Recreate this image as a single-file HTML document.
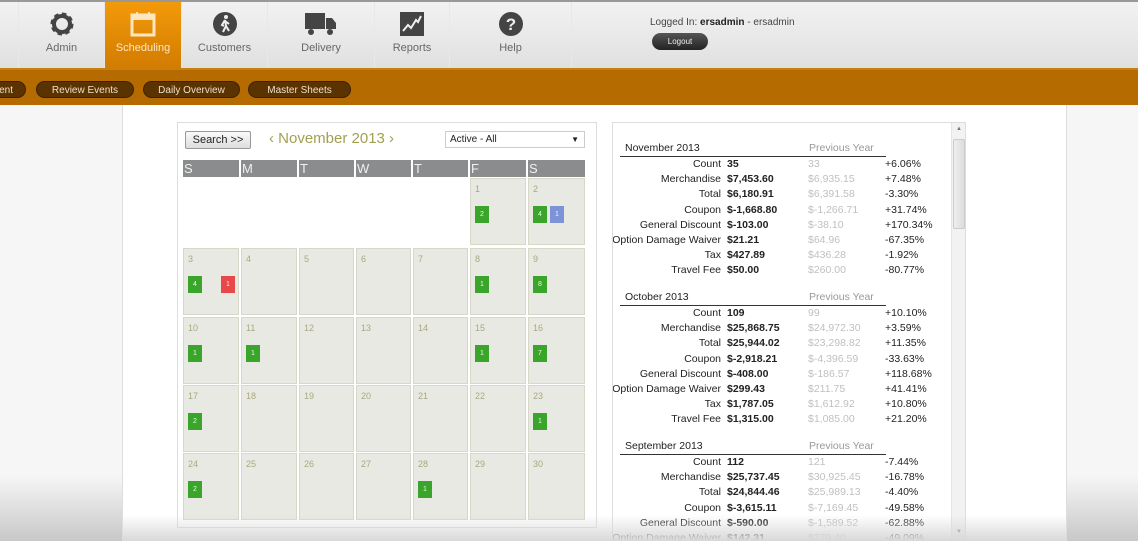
<!DOCTYPE html>
<html><head><meta charset="utf-8"><style>
*{margin:0;padding:0;box-sizing:border-box}
body{width:1138px;height:541px;overflow:hidden;position:relative;font-family:"Liberation Sans",sans-serif;background:#fff}
.a{position:absolute}
#hdr{left:0;top:0;width:1138px;height:68px;background:linear-gradient(#f2f2f2,#e0e0e0);border-top:2px solid #999}
.tab{position:absolute;top:0;height:68px;text-align:center;font-size:11px;color:#666;border-right:1px solid #e8e8e8}
.tab span{position:absolute;left:0;right:0;top:40px}
.tab svg{position:absolute;top:9px;left:50%;margin-left:-13px}
#bar{left:0;top:68px;width:1138px;height:37px;background:#b56b00;border-top:2px solid #c87f10}
.pill{position:absolute;top:11px;height:17px;border-radius:9px;background:#5a3300;color:#f0e0c8;font-size:10px;line-height:17px;text-align:center;border:1px solid #3d2200}
#lg{left:0;top:105px;width:123px;height:436px;background:linear-gradient(#f6f6f6 85%,#c8c8c8);border-right:1px solid #ddd}
#rg{left:1066px;top:105px;width:72px;height:436px;background:linear-gradient(#f6f6f6 85%,#c8c8c8);border-left:1px solid #ddd}
#bot{left:123px;top:515px;width:943px;height:26px;background:linear-gradient(rgba(255,255,255,0),#d8d8d8)}
#cal{left:177px;top:122px;width:420px;height:406px;border:1px solid #ddd;background:#fff}
.hd{position:absolute;top:160px;height:17px;background:#8a8c8e;color:#f0f0f0;font-size:13px;line-height:17px;padding-left:1px}
.c{position:absolute;height:67px;background:#e9e9e3;border:1px solid #d8d8c8}
.c i{position:absolute;left:4px;top:5px;font-style:normal;font-size:9px;color:#a8a880}
.b{position:absolute;top:27px;width:14px;height:17px;background:#3aa52a;color:#dfd;font-size:7px;line-height:17px;text-align:center}
#st{left:612px;top:122px;width:354px;height:419px;border:1px solid #ddd;background:#fff;overflow:hidden}
.sec{position:absolute;left:7px;width:330px;font-size:10.5px;color:#222}
.sh{height:17px;line-height:17px;border-bottom:1px solid #333;width:266px;position:relative;padding-left:5px;color:#222}
.sh b{position:absolute;left:189px;font-weight:normal;color:#999}
.r{height:15.2px;line-height:15.2px;position:relative}
.r .l{position:absolute;right:229px;white-space:nowrap}
.r .v{position:absolute;left:107px;font-weight:bold}
.r .p{position:absolute;left:188px;color:#c0c0c0}
.r .q{position:absolute;left:265px}
</style></head><body>
<div id="hdr" class="a">
 <div class="tab" style="left:18px;width:87px;border-left:1px solid #e8e8e8"><svg width="26" height="26" viewBox="0 0 26 26"><circle cx="13" cy="13" r="9" fill="none" stroke="#444" stroke-width="5" stroke-dasharray="4 3"/><circle cx="13" cy="13" r="8" fill="none" stroke="#444" stroke-width="4"/></svg><span>Admin</span></div>
 <div class="tab" style="left:105px;width:77px;background:linear-gradient(#f39a0a,#d07a00);color:#fde6c0;height:70px"><svg width="26" height="26" viewBox="0 0 26 26"><rect x="2" y="4" width="22" height="20" fill="none" stroke="#fde6c0" stroke-width="3"/><rect x="2" y="4" width="22" height="5" fill="#fde6c0"/><rect x="6" y="1" width="2" height="5" fill="#fde6c0"/><rect x="18" y="1" width="2" height="5" fill="#fde6c0"/></svg><span>Scheduling</span></div>
 <div class="tab" style="left:182px;width:86px"><svg width="26" height="26" viewBox="0 0 26 26"><circle cx="13" cy="13" r="12" fill="#444"/><circle cx="14" cy="6" r="2" fill="#eee"/><path d="M13 9l-3 5 2 1M13 9l1 6-3 6M14 15l3 5M13 10l4 3" stroke="#eee" stroke-width="2" fill="none"/></svg><span>Customers</span></div>
 <div class="tab" style="left:268px;width:107px"><svg width="34" height="26" viewBox="0 0 34 26" style="margin-left:-17px"><rect x="1" y="2" width="20" height="16" fill="#444"/><path d="M22 7h6l4 5v6H22z" fill="#444"/><circle cx="7" cy="21" r="3" fill="#444"/><circle cx="26" cy="21" r="3" fill="#444"/></svg><span>Delivery</span></div>
 <div class="tab" style="left:375px;width:75px"><svg width="26" height="26" viewBox="0 0 26 26"><rect x="1" y="1" width="24" height="24" fill="#444"/><path d="M4 20l5-6 3 3 5-8 2 2 3-6" stroke="#eee" stroke-width="2" fill="none"/></svg><span>Reports</span></div>
 <div class="tab" style="left:450px;width:122px"><svg width="26" height="26" viewBox="0 0 26 26"><circle cx="13" cy="13" r="12" fill="#444"/><text x="13" y="19" text-anchor="middle" font-size="17" font-weight="bold" fill="#eee" font-family="Liberation Sans">?</text></svg><span>Help</span></div>
 <div class="a" style="left:650px;top:15px;font-size:10px;color:#444">Logged In: <b style="color:#222">ersadmin</b> - ersadmin</div>
 <div class="a" style="left:652px;top:31px;width:56px;height:17px;border-radius:9px;background:linear-gradient(#555,#222);color:#eee;font-size:8px;line-height:17px;text-align:center">Logout</div>
</div>
<div id="bar" class="a">
 <div class="pill" style="left:-20px;width:46px;text-align:right;padding-right:12px">ent</div>
 <div class="pill" style="left:36px;width:98px">Review Events</div>
 <div class="pill" style="left:143px;width:97px">Daily Overview</div>
 <div class="pill" style="left:248px;width:103px">Master Sheets</div>
</div>
<div id="lg" class="a"></div><div id="rg" class="a"></div>
<div id="cal" class="a"></div>
<div class="a" style="left:185px;top:131px;width:66px;height:18px;border:1px solid #999;border-radius:2px;background:linear-gradient(#fafafa,#ddd);font-size:11px;line-height:16px;text-align:center;color:#222">Search &gt;&gt;</div>
<div class="a" style="left:269px;top:130px;font-size:15px;color:#a2a050">&lsaquo; November 2013 &rsaquo;</div>
<div class="a" style="left:445px;top:131px;width:140px;height:17px;border:1px solid #ccc;font-size:10px;line-height:15px;padding-left:4px;color:#222">Active - All<span style="position:absolute;right:5px;font-size:8px">&#9660;</span></div>
<div class="hd" style="left:183px;width:56px">S</div><div class="hd" style="left:241px;width:56px">M</div><div class="hd" style="left:299px;width:55px">T</div><div class="hd" style="left:356px;width:55px">W</div><div class="hd" style="left:413px;width:55px">T</div><div class="hd" style="left:470px;width:56px">F</div><div class="hd" style="left:528px;width:57px">S</div>
<div class="c" style="left:470px;top:178px;width:56px"><i>1</i><div class="b" style="left:4px">2</div></div>
<div class="c" style="left:528px;top:178px;width:57px"><i>2</i><div class="b" style="left:4px">4</div><div class="b" style="left:21px;background:#7d93d8">1</div></div>
<div class="c" style="left:183px;top:248px;width:56px"><i>3</i><div class="b" style="left:4px">4</div><div class="b" style="left:37px;background:#e84848">1</div></div>
<div class="c" style="left:241px;top:248px;width:56px"><i>4</i></div><div class="c" style="left:299px;top:248px;width:55px"><i>5</i></div><div class="c" style="left:356px;top:248px;width:55px"><i>6</i></div><div class="c" style="left:413px;top:248px;width:55px"><i>7</i></div>
<div class="c" style="left:470px;top:248px;width:56px"><i>8</i><div class="b" style="left:4px">1</div></div>
<div class="c" style="left:528px;top:248px;width:57px"><i>9</i><div class="b" style="left:4px">8</div></div>
<div class="c" style="left:183px;top:317px;width:56px"><i>10</i><div class="b" style="left:4px">1</div></div>
<div class="c" style="left:241px;top:317px;width:56px"><i>11</i><div class="b" style="left:4px">1</div></div>
<div class="c" style="left:299px;top:317px;width:55px"><i>12</i></div><div class="c" style="left:356px;top:317px;width:55px"><i>13</i></div><div class="c" style="left:413px;top:317px;width:55px"><i>14</i></div>
<div class="c" style="left:470px;top:317px;width:56px"><i>15</i><div class="b" style="left:4px">1</div></div>
<div class="c" style="left:528px;top:317px;width:57px"><i>16</i><div class="b" style="left:4px">7</div></div>
<div class="c" style="left:183px;top:385px;width:56px"><i>17</i><div class="b" style="left:4px">2</div></div>
<div class="c" style="left:241px;top:385px;width:56px"><i>18</i></div><div class="c" style="left:299px;top:385px;width:55px"><i>19</i></div><div class="c" style="left:356px;top:385px;width:55px"><i>20</i></div><div class="c" style="left:413px;top:385px;width:55px"><i>21</i></div><div class="c" style="left:470px;top:385px;width:56px"><i>22</i></div>
<div class="c" style="left:528px;top:385px;width:57px"><i>23</i><div class="b" style="left:4px">1</div></div>
<div class="c" style="left:183px;top:453px;width:56px"><i>24</i><div class="b" style="left:4px">2</div></div>
<div class="c" style="left:241px;top:453px;width:56px"><i>25</i></div><div class="c" style="left:299px;top:453px;width:55px"><i>26</i></div><div class="c" style="left:356px;top:453px;width:55px"><i>27</i></div>
<div class="c" style="left:413px;top:453px;width:55px"><i>28</i><div class="b" style="left:4px">1</div></div>
<div class="c" style="left:470px;top:453px;width:56px"><i>29</i></div><div class="c" style="left:528px;top:453px;width:57px"><i>30</i></div>
<div id="st" class="a">
 <div class="a" style="left:338px;top:0;width:15px;height:419px;background:#f2f2f2;border-left:1px solid #e4e4e4"><div class="a" style="left:1px;top:16px;width:12px;height:90px;background:linear-gradient(90deg,#eee,#ddd);border:1px solid #ccc;border-radius:2px"></div><div class="a" style="left:4px;top:3px;font-size:6px;color:#777">&#9650;</div><div class="a" style="left:4px;top:406px;font-size:6px;color:#777">&#9660;</div></div>
 <div class="sec" style="top:17px"><div class="sh">November 2013<b>Previous Year</b></div>
  <div class="r"><span class="l">Count</span><span class="v">35</span><span class="p">33</span><span class="q">+6.06%</span></div>
  <div class="r"><span class="l">Merchandise</span><span class="v">$7,453.60</span><span class="p">$6,935.15</span><span class="q">+7.48%</span></div>
  <div class="r"><span class="l">Total</span><span class="v">$6,180.91</span><span class="p">$6,391.58</span><span class="q">-3.30%</span></div>
  <div class="r"><span class="l">Coupon</span><span class="v">$-1,668.80</span><span class="p">$-1,266.71</span><span class="q">+31.74%</span></div>
  <div class="r"><span class="l">General Discount</span><span class="v">$-103.00</span><span class="p">$-38.10</span><span class="q">+170.34%</span></div>
  <div class="r"><span class="l">Option Damage Waiver</span><span class="v">$21.21</span><span class="p">$64.96</span><span class="q">-67.35%</span></div>
  <div class="r"><span class="l">Tax</span><span class="v">$427.89</span><span class="p">$436.28</span><span class="q">-1.92%</span></div>
  <div class="r"><span class="l">Travel Fee</span><span class="v">$50.00</span><span class="p">$260.00</span><span class="q">-80.77%</span></div>
 </div>
 <div class="sec" style="top:166px"><div class="sh">October 2013<b>Previous Year</b></div>
  <div class="r"><span class="l">Count</span><span class="v">109</span><span class="p">99</span><span class="q">+10.10%</span></div>
  <div class="r"><span class="l">Merchandise</span><span class="v">$25,868.75</span><span class="p">$24,972.30</span><span class="q">+3.59%</span></div>
  <div class="r"><span class="l">Total</span><span class="v">$25,944.02</span><span class="p">$23,298.82</span><span class="q">+11.35%</span></div>
  <div class="r"><span class="l">Coupon</span><span class="v">$-2,918.21</span><span class="p">$-4,396.59</span><span class="q">-33.63%</span></div>
  <div class="r"><span class="l">General Discount</span><span class="v">$-408.00</span><span class="p">$-186.57</span><span class="q">+118.68%</span></div>
  <div class="r"><span class="l">Option Damage Waiver</span><span class="v">$299.43</span><span class="p">$211.75</span><span class="q">+41.41%</span></div>
  <div class="r"><span class="l">Tax</span><span class="v">$1,787.05</span><span class="p">$1,612.92</span><span class="q">+10.80%</span></div>
  <div class="r"><span class="l">Travel Fee</span><span class="v">$1,315.00</span><span class="p">$1,085.00</span><span class="q">+21.20%</span></div>
 </div>
 <div class="sec" style="top:315px"><div class="sh">September 2013<b>Previous Year</b></div>
  <div class="r"><span class="l">Count</span><span class="v">112</span><span class="p">121</span><span class="q">-7.44%</span></div>
  <div class="r"><span class="l">Merchandise</span><span class="v">$25,737.45</span><span class="p">$30,925.45</span><span class="q">-16.78%</span></div>
  <div class="r"><span class="l">Total</span><span class="v">$24,844.46</span><span class="p">$25,989.13</span><span class="q">-4.40%</span></div>
  <div class="r"><span class="l">Coupon</span><span class="v">$-3,615.11</span><span class="p">$-7,169.45</span><span class="q">-49.58%</span></div>
  <div class="r"><span class="l">General Discount</span><span class="v">$-590.00</span><span class="p">$-1,589.52</span><span class="q">-62.88%</span></div>
  <div class="r"><span class="l">Option Damage Waiver</span><span class="v">$142.31</span><span class="p">$279.40</span><span class="q">-49.09%</span></div>
 </div>
</div>
<div id="bot" class="a"></div>
</body></html>
